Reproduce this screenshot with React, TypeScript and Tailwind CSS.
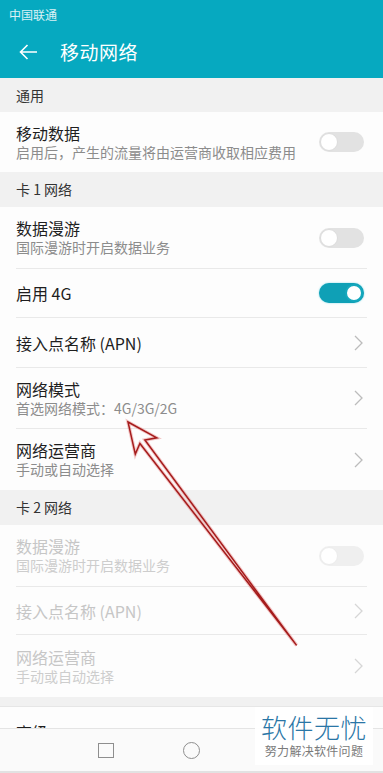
import React from 'react';

type Item = {
  title: string;
  sub?: string;
  kind: 'toggle' | 'chevron';
  on?: boolean;
  disabled?: boolean;
  h: string;
  last?: boolean;
};

const SECTIONS: { label: string; h: string; items: Item[] }[] = [
  {
    label: '通用',
    h: 'h-[34px]',
    items: [
      { title: '移动数据', sub: '启用后，产生的流量将由运营商收取相应费用', kind: 'toggle', h: 'h-[60px]', last: true },
    ],
  },
  {
    label: '卡 1 网络',
    h: 'h-[35px]',
    items: [
      { title: '数据漫游', sub: '国际漫游时开启数据业务', kind: 'toggle', h: 'h-[62px]' },
      { title: '启用 4G', kind: 'toggle', on: true, h: 'h-[49px]' },
      { title: '接入点名称 (APN)', kind: 'chevron', h: 'h-[50px]' },
      { title: '网络模式', sub: '首选网络模式：4G/3G/2G', kind: 'chevron', h: 'h-[61px]' },
      { title: '网络运营商', sub: '手动或自动选择', kind: 'chevron', h: 'h-[61px]', last: true },
    ],
  },
  {
    label: '卡 2 网络',
    h: 'h-[35px]',
    items: [
      { title: '数据漫游', sub: '国际漫游时开启数据业务', kind: 'toggle', disabled: true, h: 'h-[62px]' },
      { title: '接入点名称 (APN)', kind: 'chevron', disabled: true, h: 'h-[48px]' },
      { title: '网络运营商', sub: '手动或自动选择', kind: 'chevron', disabled: true, h: 'h-[62px]', last: true },
    ],
  },
];

function Toggle({ on, disabled }: { on?: boolean; disabled?: boolean }) {
  if (on) {
    return (
      <div className="w-[45px] h-[20px] rounded-full bg-[#0fa0b6] flex items-center justify-end pr-[1px] shadow-[0_0_2px_#7fd8e6]">
        <div className="w-[18px] h-[18px] rounded-full bg-white border-[2px] border-[#14a8bd]" />
      </div>
    );
  }
  return (
    <div className={`w-[45px] h-[20px] rounded-full flex items-center pl-[1px] ${disabled ? 'bg-[#efefef]' : 'bg-[#e2e2e2]'}`}>
      <div className={`w-[18px] h-[18px] rounded-full bg-white border ${disabled ? 'border-[#ececec]' : 'border-[#dcdcdc]'}`} />
    </div>
  );
}

function Chevron({ disabled }: { disabled?: boolean }) {
  return (
    <svg width="9" height="16" viewBox="0 0 9 16" className="mr-[1px]">
      <path d="M1 1 L8 8 L1 15" fill="none" stroke={disabled ? '#d6d6d6' : '#bcbcbc'} strokeWidth="1.3" />
    </svg>
  );
}

function Row({ item }: { item: Item }) {
  return (
    <div className={`bg-[#fdfdfd] px-4 ${item.h}`}>
      <div className={`h-full flex items-center justify-between pr-[3px] ${item.last ? '' : 'border-b border-[#e9e9e9]'}`}>
        <div className="flex flex-col">
          <span className={`text-[16px] leading-[20px] ${item.disabled ? 'text-[#c6c6c6]' : 'text-[#1e1e1e]'}`}>{item.title}</span>
          {item.sub && (
            <span className={`text-[14px] leading-[19px] ${item.disabled ? 'text-[#cdcdcd]' : 'text-[#8c8c8c]'}`}>{item.sub}</span>
          )}
        </div>
        {item.kind === 'toggle' ? <Toggle on={item.on} disabled={item.disabled} /> : <Chevron disabled={item.disabled} />}
      </div>
    </div>
  );
}

export default function App() {
  return (
    <div className="relative w-[383px] h-[773px] overflow-hidden flex flex-col bg-white font-['Noto_Sans_CJK_SC','Noto_Sans',sans-serif]">
      {/* status + toolbar */}
      <div className="h-[78px] bg-[#06a9c0] flex flex-col shrink-0">
        <div className="h-[28px] flex items-center pl-[9px] pt-[2px]">
          <span className="text-[12px] text-white/85">中国联通</span>
        </div>
        <div className="flex-1 flex items-center pl-[19px] pb-[2px]">
          <svg width="19" height="16" viewBox="0 0 19 16">
            <path d="M18 8 H1.5 M8.5 1 L1.5 8 L8.5 15" fill="none" stroke="#ffffff" strokeWidth="1.6" />
          </svg>
          <span className="ml-[22px] text-[19px] text-white tracking-[0.5px]">移动网络</span>
        </div>
      </div>

      <div className="flex-1 overflow-hidden bg-[#f1f1f1]">
        {SECTIONS.map((sec) => (
          <div key={sec.label}>
            <div className={`${sec.h} flex items-center px-4 text-[14px] text-[#333333]`}>{sec.label}</div>
            {sec.items.map((it, i) => (
              <Row key={i} item={it} />
            ))}
          </div>
        ))}
        <div className="h-[10px] border-b border-[#e6e6e6]" />
        <div className="h-[50px] bg-[#fdfdfd] px-4 flex items-center">
          <span className="text-[16px] text-[#1e1e1e]">高级</span>
        </div>
      </div>

      {/* system nav bar */}
      <div className="h-[45px] shrink-0 bg-[#fafafa] border-t border-[#e4e4e4] border-b-[2px] border-b-[#e2e2e2] flex items-center">
        <div className="ml-[98px] w-[16px] h-[15px] border-[1.5px] border-[#8e8e8e]" />
        <div className="ml-[69px] w-[17px] h-[17px] rounded-full border-[1.5px] border-[#8e8e8e]" />
      </div>

      {/* watermark */}
      <div className="absolute left-[255px] top-[707px] w-[118px] h-[58px] bg-white/95 flex flex-col items-center pt-[4px]">
        <span className="text-[26px] leading-[32px] font-light text-[#2a76a6] tracking-[0.5px]">软件无忧</span>
        <span className="text-[12px] leading-[16px] text-[#7a7a7a] tracking-[0.3px]">努力解决软件问题</span>
      </div>

      {/* annotation arrow */}
      <svg className="absolute inset-0 pointer-events-none" width="383" height="773" viewBox="0 0 383 773">
        <polygon
          points="128,422 156.8,437.8 144.9,440 296.6,645.4 139.9,443.5 135.3,454.1"
          fill="none"
          stroke="#e06060"
          strokeOpacity="0.35"
          strokeWidth="3.5"
          strokeLinejoin="miter"
        />
        <polygon
          points="128,422 156.8,437.8 144.9,440 296.6,645.4 139.9,443.5 135.3,454.1"
          fill="none"
          stroke="#a51c1c"
          strokeWidth="1.5"
          strokeLinejoin="miter"
        />
      </svg>
    </div>
  );
}
